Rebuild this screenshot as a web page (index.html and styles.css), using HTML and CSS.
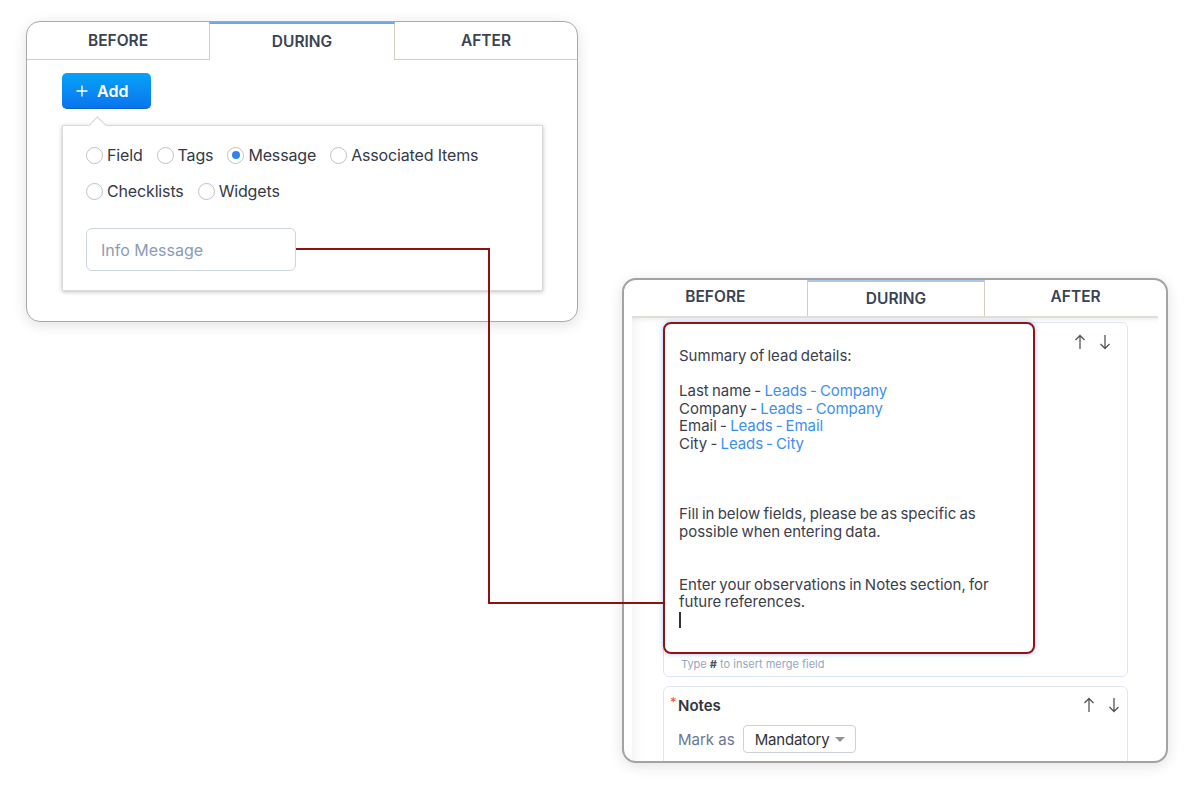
FILE: index.html
```html
<!DOCTYPE html>
<html lang="en">
<head>
  <meta charset="UTF-8" />
  <title>Blueprint transition - During</title>
  <meta name="viewport" content="width=device-width, initial-scale=1" />
  <link rel="stylesheet" href="styles.css">
</head>
<body>
  <div class="canvas">

    <!-- left window: choosing what to add -->
    <section class="panel panel-left">
      <nav class="tabs">
        <div class="tab">BEFORE</div>
        <div class="tab active">DURING</div>
        <div class="tab">AFTER</div>
      </nav>
      <div class="panel-body">
        <button class="btn-add">
          <svg width="12" height="12" viewBox="0 0 12 12"><path d="M6 0.5v11M0.5 6h11" stroke="#fff" stroke-width="1.4"/></svg>
          Add
        </button>
        <div class="popover">
          <div class="radio-row">
            <label class="radio"><span class="circle"></span>Field</label>
            <label class="radio"><span class="circle"></span>Tags</label>
            <label class="radio checked"><span class="circle"></span>Message</label>
            <label class="radio"><span class="circle"></span>Associated Items</label>
          </div>
          <div class="radio-row">
            <label class="radio"><span class="circle"></span>Checklists</label>
            <label class="radio"><span class="circle"></span>Widgets</label>
          </div>
          <div class="info-input">Info Message</div>
        </div>
      </div>
    </section>

    <!-- right window: the message as it is typed -->
    <section class="panel panel-right">
      <nav class="tabs">
        <div class="tab">BEFORE</div>
        <div class="tab active">DURING</div>
        <div class="tab">AFTER</div>
      </nav>
      <div class="panel-content">
        <div class="card card-message">
          <div class="card-top">
            <div class="editor">
              <p>Summary of lead details:</p>
              <p>&nbsp;</p>
              <p>Last name - <span class="merge">Leads - Company</span></p>
              <p>Company - <span class="merge">Leads - Company</span></p>
              <p>Email - <span class="merge">Leads - Email</span></p>
              <p>City - <span class="merge">Leads - City</span></p>
              <p>&nbsp;</p>
              <p>&nbsp;</p>
              <p>&nbsp;</p>
              <p>Fill in below fields, please be as specific as possible when entering data.</p>
              <p>&nbsp;</p>
              <p>&nbsp;</p>
              <p>Enter your observations in Notes section, for future references.</p>
              <p><span class="caret"></span></p>
            </div>
            <div class="move-arrows">
              <svg width="12" height="16" viewBox="0 0 12 16"><path d="M6 15V1.5M1.5 6L6 1.5 10.5 6" fill="none" stroke="#555" stroke-width="1.3"/></svg>
              <svg width="12" height="16" viewBox="0 0 12 16"><path d="M6 1v13.5M1.5 10L6 14.5 10.5 10" fill="none" stroke="#555" stroke-width="1.3"/></svg>
            </div>
          </div>
          <div class="hint">Type <b>#</b> to insert merge field</div>
        </div>

        <div class="card card-field">
          <div class="field-head">
            <div class="field-name"><span class="req">*</span>Notes</div>
            <div class="move-arrows">
              <svg width="12" height="16" viewBox="0 0 12 16"><path d="M6 15V1.5M1.5 6L6 1.5 10.5 6" fill="none" stroke="#555" stroke-width="1.3"/></svg>
              <svg width="12" height="16" viewBox="0 0 12 16"><path d="M6 1v13.5M1.5 10L6 14.5 10.5 10" fill="none" stroke="#555" stroke-width="1.3"/></svg>
            </div>
          </div>
          <div class="mark-row">
            <span class="mark-label">Mark as</span>
            <div class="select">Mandatory <span class="select-caret"></span></div>
          </div>
        </div>
      </div>
    </section>

    <!-- line tying the info message box to the editor -->
    <svg class="connector" width="1196" height="790" viewBox="0 0 1196 790">
      <polyline points="296,249 489,249 489,603 664,603" fill="none" stroke="#8c1212" stroke-width="2"/>
    </svg>
  </div>
</body>
</html>
```

FILE: styles.css
```css
* {
  box-sizing: border-box;
}
body {
  margin: 0;
  background: #fff;
  font-family: Inter, 'Noto Sans', sans-serif;
  color: #343a46;
}
.canvas {
  position: relative;
  width: 1196px;
  height: 790px;
  overflow: hidden;
}
.panel {
  position: absolute;
  background: #fff;
  border-radius: 14px;
  overflow: hidden;
  box-shadow: 0 3px 14px rgba(0, 0, 0, 0.12);
}
.panel-left {
  left: 26px;
  top: 21px;
  width: 552px;
  height: 301px;
  border: 1px solid #a9a9a9;
}
.panel-right {
  left: 622px;
  top: 278px;
  width: 546px;
  height: 485px;
  border: 2px solid #a3a3a3;
  display: flex;
  flex-direction: column;
}

/* tabs */
.tabs {
  display: grid;
  grid-template-columns: 182fr 186fr 182fr;
}
.panel-right .tabs {
  grid-template-columns: 183fr 179fr 181fr;
}
.tab {
  height: 38px;
  padding-bottom: 1px;
  display: flex;
  align-items: center;
  justify-content: center;
  font-size: 15.5px;
  font-weight: 600;
  color: #3b4252;
  border-bottom: 1px solid #d4cdc0;
}
.tab.active {
  border-top: 2px solid #6ea6ec;
  border-left: 1px solid #d4cdc0;
  border-right: 1px solid #d4cdc0;
  border-bottom: none;
  padding-bottom: 2px;
}
.panel-right .tab {
  height: 36px;
  padding-bottom: 4px;
  border-bottom: none;
}
.panel-right .tab.active {
  padding-bottom: 2px;
  border-top-color: #a9c8f0;
}

/* left window body */
.panel-body {
  padding: 13px 0 0 35px;
}
.btn-add {
  display: flex;
  align-items: center;
  gap: 9px;
  width: 89px;
  height: 36px;
  padding: 0 0 0 14px;
  border: none;
  border-bottom: 1px solid #0a63c9;
  border-radius: 5px;
  background: linear-gradient(#06a3f8, #0b74ee);
  color: #fff;
  font-family: inherit;
  font-size: 16px;
  font-weight: 600;
}
.popover {
  position: relative;
  margin-top: 16px;
  width: 481px;
  padding: 19px 23px 19px;
  border: 1px solid #dadada;
  background: #fff;
  box-shadow: 0 1px 4px rgba(0, 0, 0, 0.25);
}
.popover::before {
  content: "";
  position: absolute;
  left: 28px;
  top: -7px;
  width: 12px;
  height: 12px;
  background: #fff;
  border-top: 1px solid #d6d6d6;
  border-left: 1px solid #d6d6d6;
  transform: rotate(45deg);
}
.radio-row {
  display: flex;
  height: 20px;
  align-items: center;
}
.radio-row + .radio-row {
  margin-top: 16px;
}
.radio {
  display: flex;
  align-items: center;
  gap: 4px;
  margin-right: 14px;
  font-size: 16px;
  letter-spacing: -0.15px;
  color: #343a46;
}
.circle {
  width: 17px;
  height: 17px;
  border-radius: 50%;
  border: 1.5px solid #bcc2cb;
  display: flex;
  align-items: center;
  justify-content: center;
}
.radio.checked .circle::after {
  content: "";
  width: 8px;
  height: 8px;
  border-radius: 50%;
  background: #2f83ea;
}
.info-input {
  margin-top: 27px;
  width: 210px;
  height: 43px;
  padding: 0 14px;
  display: flex;
  align-items: center;
  border: 1px solid #cfd5df;
  border-radius: 6px;
  font-size: 16px;
  color: #8b9bb8;
}

/* right window body */
.panel-content {
  flex: 1;
  margin: 0 8px;
  padding: 4px 30px 0 31px;
  border-top: 2px solid #e3ded5;
  overflow: hidden;
  box-shadow: inset 0 6px 6px -6px rgba(0, 0, 0, 0.12), inset 14px 0 14px -12px rgba(0, 0, 0, 0.06);
}
.card {
  border: 1px solid #dfe6f0;
  border-radius: 6px;
  background: #fff;
}
.card-message {
  height: 355px;
}
.card-top {
  display: flex;
  justify-content: space-between;
}
.editor {
  width: 372px;
  height: 332px;
  margin: -1px 0 0 -1px;
  padding: 23px 14px;
  border: 2px solid #8e1515;
  border-radius: 8px;
  box-shadow: 0 0 5px rgba(90, 150, 240, 0.55);
  font-size: 15px;
  line-height: 17.6px;
  word-spacing: -1px;
  color: #3b404b;
}
.editor p {
  margin: 0;
}
.merge {
  color: #3d8fef;
  letter-spacing: -0.1px;
}
.caret {
  display: inline-block;
  width: 1.5px;
  height: 16px;
  margin-top: 1px;
  background: #333;
  vertical-align: top;
}
.move-arrows {
  display: flex;
  gap: 13px;
  height: 16px;
}
.card-message .move-arrows {
  margin: 11px 16px 0 0;
}
.hint {
  padding: 2px 0 0 17px;
  font-size: 11px;
  color: #97a6bf;
  line-height: 16px;
}
.hint b {
  color: #4a5366;
}
.card-field {
  margin-top: 9px;
  height: 100px;
  padding: 8px 7px 0 6px;
}
.field-head {
  display: flex;
  justify-content: space-between;
  align-items: center;
  height: 20px;
}
.field-name {
  font-size: 15px;
  font-weight: 600;
  color: #2f3541;
}
.req {
  display: inline-block;
  width: 8px;
  font-size: 13px;
  font-weight: 400;
  color: #f04b4b;
  vertical-align: top;
  line-height: 12px;
}
.mark-row {
  display: flex;
  align-items: center;
  gap: 8px;
  margin-top: 10px;
  padding-left: 8px;
}
.mark-label {
  font-size: 15px;
  color: #6a7692;
}
.select {
  display: flex;
  align-items: center;
  justify-content: space-between;
  width: 113px;
  height: 28px;
  padding: 0 10px 0 11px;
  border: 1px solid #cdd2da;
  border-radius: 4px;
  font-size: 15px;
  letter-spacing: -0.2px;
  color: #333;
}
.select-caret {
  width: 0;
  height: 0;
  border-left: 5px solid transparent;
  border-right: 5px solid transparent;
  border-top: 5px solid #8d929b;
}

.connector {
  position: absolute;
  left: 0;
  top: 0;
  pointer-events: none;
}
```
